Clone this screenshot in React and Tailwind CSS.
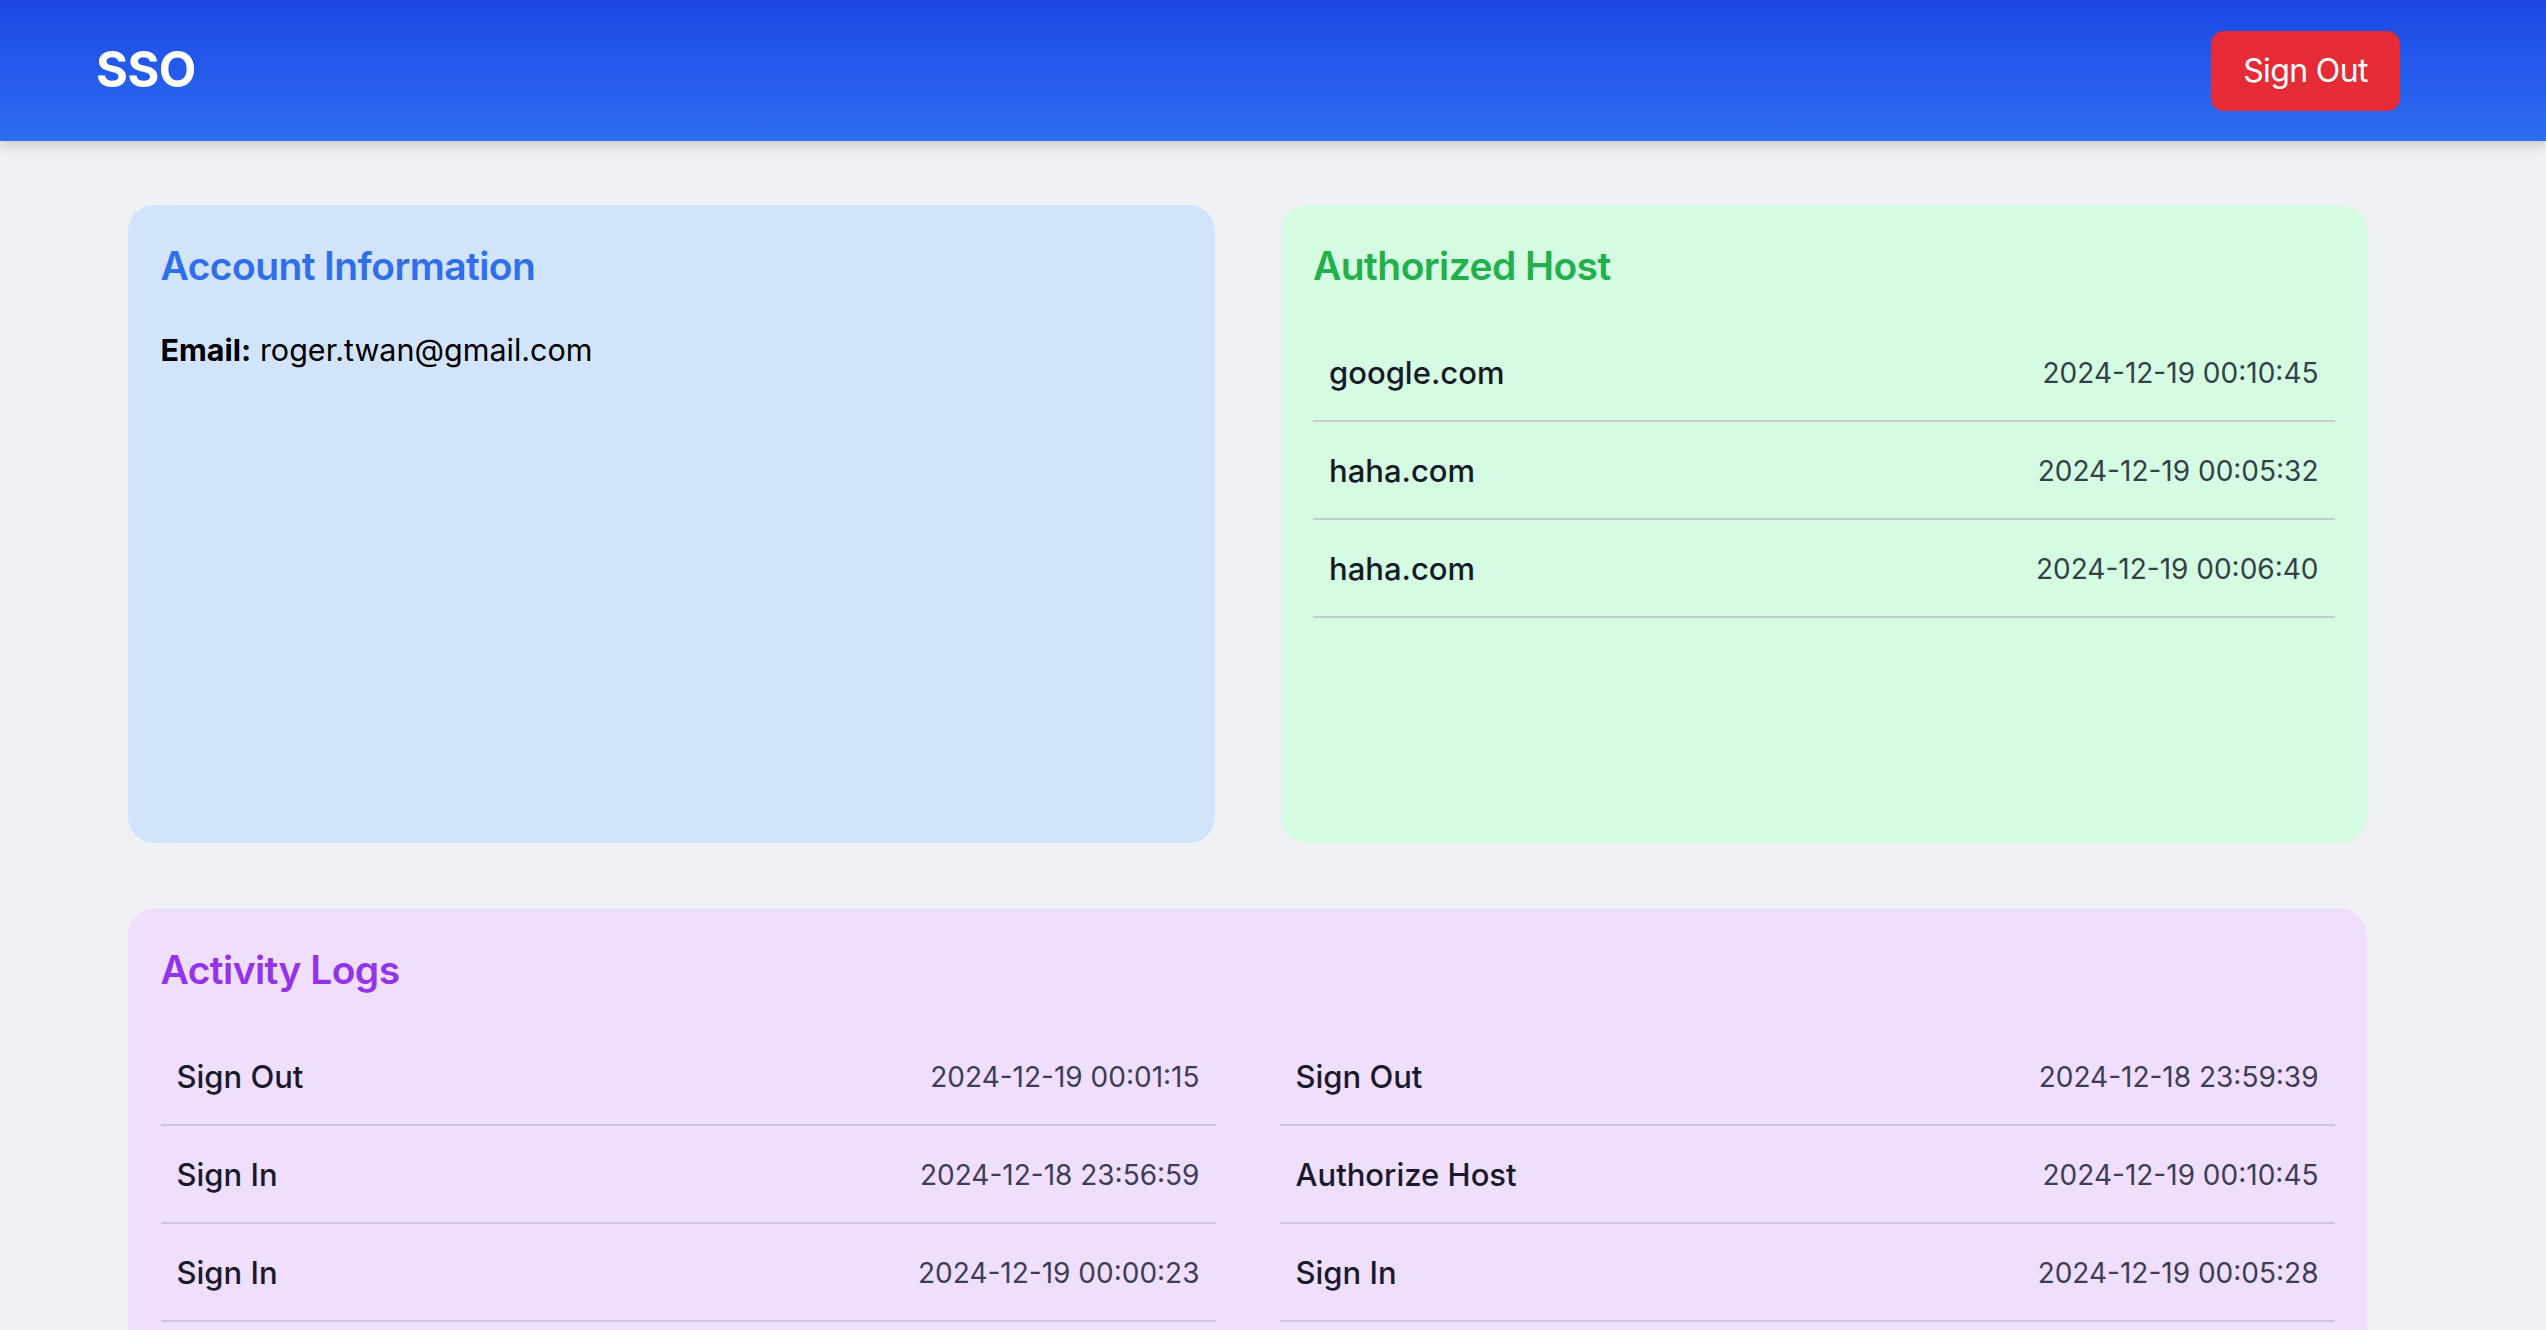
export default function App() {
  const hosts = [
    ["google.com", "2024-12-19 00:10:45"],
    ["haha.com", "2024-12-19 00:05:32"],
    ["haha.com", "2024-12-19 00:06:40"],
  ];
  const logs = [
    ["Sign Out", "2024-12-19 00:01:15"],
    ["Sign Out", "2024-12-18 23:59:39"],
    ["Sign In", "2024-12-18 23:56:59"],
    ["Authorize Host", "2024-12-19 00:10:45"],
    ["Sign In", "2024-12-19 00:00:23"],
    ["Sign In", "2024-12-19 00:05:28"],
  ];
  return (
    <div className="min-h-screen bg-[#f0f1f5] font-['Inter',sans-serif]">
      <header className="relative z-10 h-[141px] flex items-center justify-between pl-[96px] pr-[146px] bg-linear-to-b from-[#1e47e6] to-[#2e6cf1] shadow-[0_4px_12px_rgba(0,0,0,0.18)]">
        <h1 className="text-white font-bold text-[48.75px] leading-none tracking-[-0.01em]">SSO</h1>
        <button className="w-[189px] h-[80px] rounded-[13px] bg-[#e52b36] text-white text-[32px] tracking-[-0.02em]">
          Sign Out
        </button>
      </header>
      <main className="pl-[128px] pr-[179px] pt-[64px]">
        <div className="grid grid-cols-2 gap-[66px]">
          <section className="h-[638px] rounded-[26px] bg-[#d2e3fc] p-[32.5px]">
            <h2 className="text-[39px] leading-[55px] font-semibold text-[#2f6fe9] tracking-[-0.015em] mb-[34px]">
              Account Information
            </h2>
            <p className="text-[30.5px] leading-[46px] text-black">
              <span className="font-bold">Email:</span> roger.twan@gmail.com
            </p>
          </section>
          <section className="h-[638px] rounded-[26px] bg-[#d5fce3] p-[32.5px]">
            <h2 className="text-[39px] leading-[55px] font-semibold text-[#22b04c] tracking-[-0.015em] mb-[31px]">
              Authorized Host
            </h2>
            <div>
              {hosts.map(([name, time], i) => (
                <div
                  key={i}
                  className="flex items-center justify-between px-[16px] pt-[26px] pb-[24px] border-b-2 border-[#c5cccb]"
                >
                  <span className="text-[31px] leading-[46px] font-medium text-[#151b26]">{name}</span>
                  <span className="text-[28px] text-[#334245]">{time}</span>
                </div>
              ))}
            </div>
          </section>
        </div>
        <section className="mt-[66px] rounded-[26px] bg-[#efdffc] p-[32.5px]">
          <h2 className="text-[39px] leading-[55px] font-semibold text-[#9333ea] tracking-[-0.015em] mb-[31px]">
            Activity Logs
          </h2>
          <div className="grid grid-cols-2 gap-x-[64px]">
            {logs.map(([name, time], i) => (
              <div
                key={i}
                className="flex items-center justify-between px-[16px] pt-[26px] pb-[24px] border-b-2 border-[#cbc7d8]"
              >
                <span className="text-[31px] leading-[46px] font-medium text-[#1a1a2c]">{name}</span>
                <span className="text-[28px] text-[#3d3d55]">{time}</span>
              </div>
            ))}
          </div>
        </section>
      </main>
    </div>
  );
}
